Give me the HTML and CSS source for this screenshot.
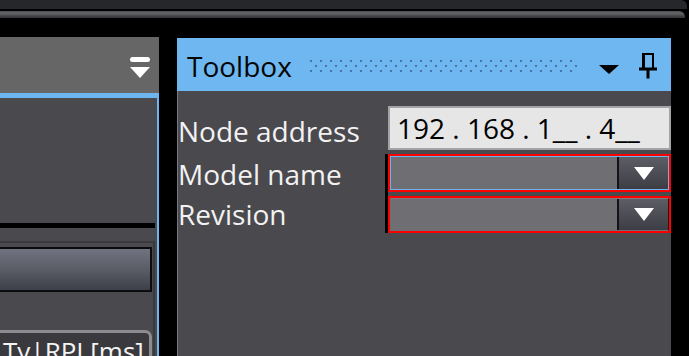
FILE: index.html
```html
<!DOCTYPE html>
<html lang="en">
<head>
    <meta charset="UTF-8">
    <meta name="viewport" content="width=device-width, initial-scale=1.0">
    <title>Toolbox</title>
    <link rel="stylesheet" href="styles.css">
</head>
<body>
    <div class="titlebar"></div>
    <div class="rail"></div>
    <div class="workspace">
        <section class="pane-left">
            <div class="pane-left-head">
                <svg class="menu-icon" width="20" height="21" viewBox="0 0 20 21">
                    <rect x="0" y="0" width="20" height="5" rx="2.5" fill="#fff"/>
                    <path d="M0 10H20L10 21z" fill="#fff"/>
                </svg>
            </div>
            <div class="pane-left-body">
                <div class="upper"></div>
                <div class="splitter"></div>
                <div class="group">
                    <div class="group-btn"></div>
                    <div class="tab">Ty|RPI [ms]</div>
                </div>
            </div>
        </section>

        <section class="toolbox">
            <header class="toolbox-head">
                <h2>Toolbox</h2>
                <span class="grip"></span>
                <span class="drop"></span>
                <svg class="pin" width="18" height="26" viewBox="0 0 18 26">
                    <path d="M3 0H15V15H13V2H6V15H3z M0 14.5H18V17.5H0z M7.5 17.5H10.5V25.5H7.5z" fill="#000"/>
                </svg>
            </header>
            <div class="toolbox-body">
                <div class="form">
                    <label class="lbl lbl-1">Node address</label>
                    <div class="cell">
                        <div class="ip">192 . 168 . 1__ . 4__</div>
                    </div>

                    <label class="lbl lbl-2">Model name</label>
                    <div class="cell combo-cell gap-below">
                        <div class="combo focused">
                            <div class="combo-inner">
                                <div class="combo-value"></div>
                                <div class="combo-btn"><span class="tri"></span></div>
                            </div>
                        </div>
                    </div>

                    <label class="lbl lbl-3">Revision</label>
                    <div class="cell combo-cell">
                        <div class="combo short">
                            <div class="combo-inner">
                                <div class="combo-value"></div>
                                <div class="combo-btn"><span class="tri"></span></div>
                            </div>
                        </div>
                    </div>
                </div>
            </div>
        </section>
    </div>
</body>
</html>
```

FILE: styles.css
```css
* {
    box-sizing: border-box;
}
body {
    margin: 0;
    width: 689px;
    height: 356px;
    overflow: hidden;
    background: #000;
    font-family: "Open Sans", "Liberation Sans", sans-serif;
}
.titlebar {
    height: 9px;
    background: #26272b;
    border-radius: 0 6px 0 0;
    margin-right: 2px;
}
.rail {
    margin-top: 2px;
    margin-right: 4px;
    height: 7px;
    border-radius: 0 6px 0 0;
    background: linear-gradient(#505155 0%, #626367 35%, #45464a 70%, #323337 100%);
}
.workspace {
    display: flex;
    align-items: stretch;
    height: 338px;
    padding-top: 19px;
}

/* left pane */
.pane-left {
    width: 159px;
    display: flex;
    flex-direction: column;
    overflow: hidden;
}
.pane-left-head {
    flex-shrink: 0;
    height: 61px;
    background: #666666;
    border-bottom: 5px solid #6db5ef;
    display: flex;
    justify-content: flex-end;
    align-items: flex-start;
    padding: 20px 9px 0 0;
}
.pane-left-body {
    flex: 1 0 auto;
    background: #4a4a4e;
    border-right: 2px solid #6db5ef;
    display: flex;
    flex-direction: column;
}
.upper {
    flex-shrink: 0;
    height: 125px;
}
.splitter {
    flex-shrink: 0;
    height: 5px;
    background: #000;
    margin-right: 2px;
}
.group {
    flex: 1 0 auto;
    margin-top: 13px;
    margin-right: 2px;
    border-top: 2px solid #3a3a3d;
    border-right: 2px solid #3a3a3d;
    padding: 4px 1px 0 0;
}
.group-btn {
    height: 45px;
    border: 2px solid #0c0c0e;
    border-left: none;
    background: linear-gradient(#717380, #5a5c66 50%, #3e4049);
}
.tab {
    margin-top: 38px;
    height: 40px;
    background: #3a3a3e;
    border-top: 3px solid #8c8c8e;
    border-right: 3px solid #8c8c8e;
    border-radius: 0 7px 0 0;
    color: #f4f4f4;
    font-size: 26px;
    line-height: 32px;
    padding: 2px 0 0 3px;
    white-space: nowrap;
}

/* toolbox */
.toolbox {
    width: 494px;
    margin-left: 18px;
    margin-top: 1px;
    display: flex;
    flex-direction: column;
}
.toolbox-head {
    flex-shrink: 0;
    height: 53px;
    background: #6fb7f0;
    display: flex;
    align-items: flex-start;
    padding: 0 14px 0 10px;
}
.toolbox-head h2 {
    margin: 14px 0 0 0;
    font-size: 28px;
    font-weight: 400;
    line-height: 28px;
    color: #050505;
}
.grip {
    flex: 1;
    height: 12px;
    margin: 22px 21px 0 16px;
    background-image:
        radial-gradient(circle at 3px 1px, #4876a6 1px, transparent 1.6px),
        radial-gradient(circle at 8px 6px, #4876a6 1px, transparent 1.6px);
    background-size: 10px 10px;
}
.drop {
    width: 0;
    height: 0;
    margin: 27px 20px 0 0;
    border-left: 10px solid transparent;
    border-right: 10px solid transparent;
    border-top: 9px solid #000;
}
.pin {
    margin-top: 15px;
}
.toolbox-body {
    flex: 1;
    background: #4a494e;
    border-left: 1px solid #7a7a7e;
    padding-top: 15px;
}
.form {
    display: grid;
    grid-template-columns: 207px 286px;
}
.lbl {
    align-self: start;
    font-size: 28px;
    line-height: 28px;
    color: #f2f2f2;
    white-space: nowrap;
}
.lbl-1 { margin-top: 11px; }
.lbl-2 { margin-top: 6px; }
.lbl-3 { margin-top: 4px; }

.ip {
    margin: 0 0 4px 3px;
    height: 44px;
    border: 2px solid #a4a4a6;
    background: #e6e6e6;
    color: #000;
    font-size: 28px;
    line-height: 39px;
    padding: 1px 0 0 7px;
    white-space: nowrap;
}
.combo-cell {
    border-left: 3px solid #000;
}
.gap-below {
    padding-bottom: 4px;
}
.combo {
    height: 38px;
    border: 2px solid #ff0000;
    background: #6e6e73;
}
.combo.short {
    height: 37px;
}
.combo-inner {
    height: 100%;
    display: flex;
    border: 1px solid transparent;
}
.combo.focused .combo-inner {
    border-color: #6cb4ee;
}
.combo.short .combo-inner {
    border-top-color: #7c7c80;
    border-right-color: #151515;
}
.combo-value {
    flex: 1;
}
.combo-btn {
    width: 51px;
    border-left: 2px solid #141416;
    background: linear-gradient(#5c5d65, #3c3d45);
    display: flex;
    align-items: center;
    justify-content: center;
}
.tri {
    width: 0;
    height: 0;
    border-left: 10px solid transparent;
    border-right: 10px solid transparent;
    border-top: 13px solid #fff;
}
```
